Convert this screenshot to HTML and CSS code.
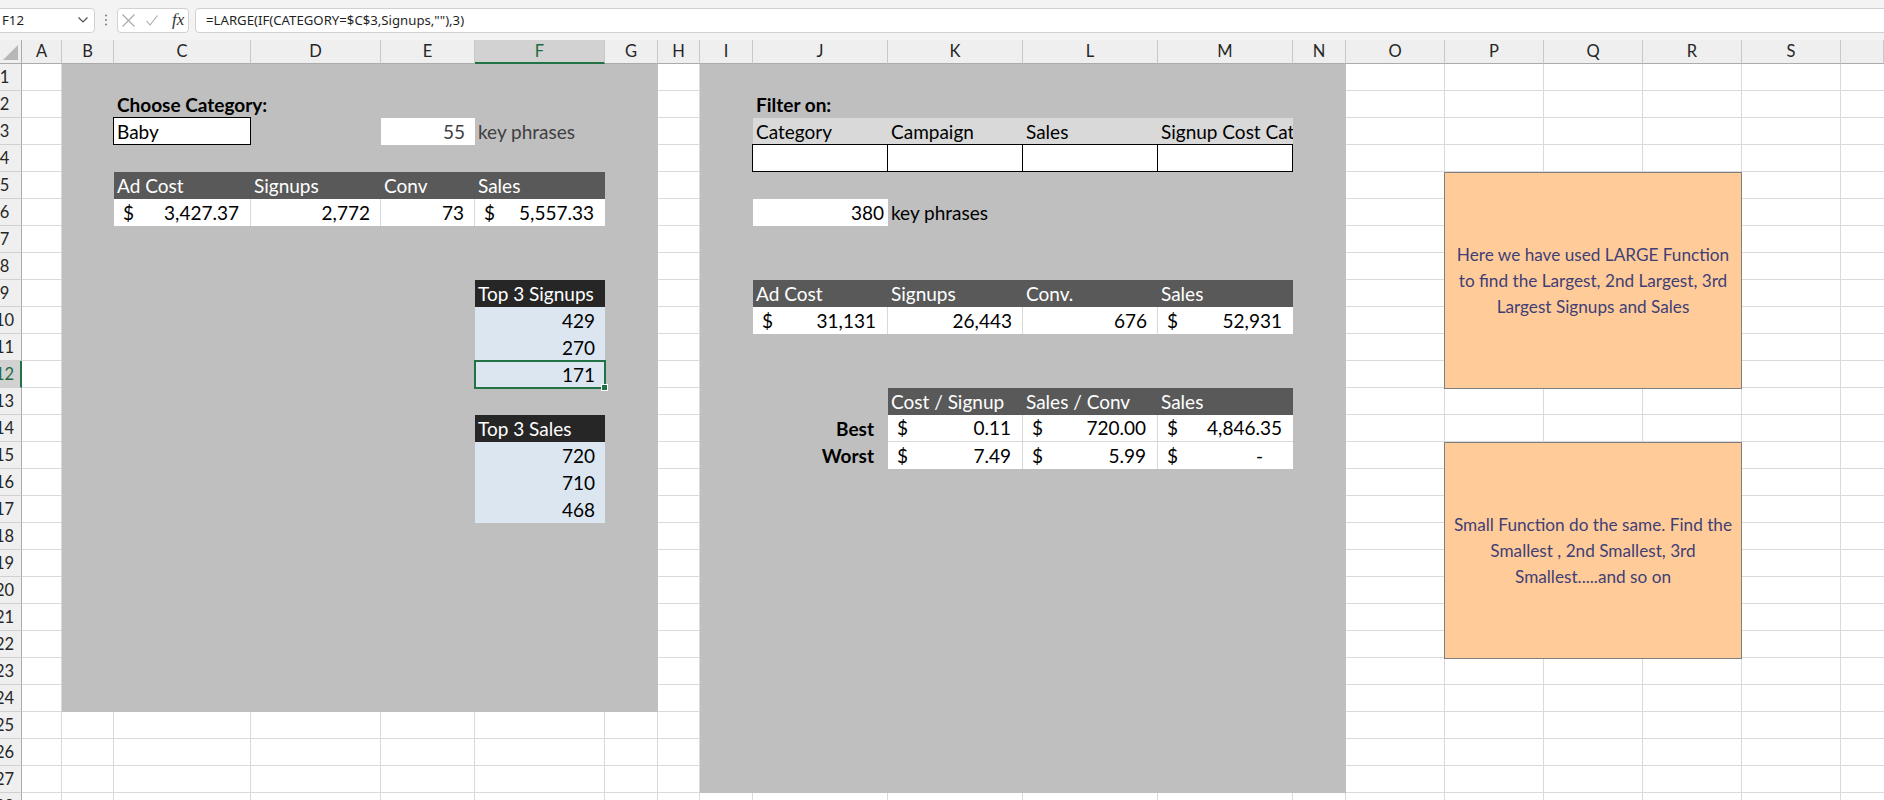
FILE: index.html
```html
<!DOCTYPE html>
<html>
<head>
<meta charset="utf-8">
<title>Excel – LARGE function</title>
<link rel="stylesheet" href="styles.css">
</head>
<body>
<div class="app">
  <div class="fbar">
    <div class="namebox">
      <span>F12</span>
      <svg class="chev" width="10" height="6" viewBox="0 0 10 6"><polyline points="0.5,0.5 5,5 9.5,0.5" fill="none" stroke="#505050" stroke-width="1.2"/></svg>
    </div>
    <svg class="vdots" width="4" height="12" viewBox="0 0 4 12"><circle cx="2" cy="1.5" r="1.1" fill="#8a8a8a"/><circle cx="2" cy="6" r="1.1" fill="#8a8a8a"/><circle cx="2" cy="10.5" r="1.1" fill="#8a8a8a"/></svg>
    <div class="fbtns">
      <svg class="ico-x" width="13" height="13" viewBox="0 0 13 13"><path d="M0.5 0.5 L12.5 12.5 M12.5 0.5 L0.5 12.5" stroke="#a8a8a8" stroke-width="1.1" fill="none"/></svg>
      <svg class="ico-ok" width="12" height="11" viewBox="0 0 12 11"><polyline points="0.5,6 4,10 11.5,0.5" fill="none" stroke="#a8a8a8" stroke-width="1.1"/></svg>
      <span class="fx">fx</span>
    </div>
    <div class="finput">=LARGE(IF(CATEGORY=$C$3,Signups,""),3)</div>
  </div>

  <div class="sheet">
    <div class="corner"><svg width="21" height="23" viewBox="0 0 21 23"><polygon points="18,5 18,20 3,20" fill="#b7b7b7"/></svg></div>
    <div class="ch cA">A</div>
    <div class="ch cB">B</div>
    <div class="ch cC">C</div>
    <div class="ch cD">D</div>
    <div class="ch cE">E</div>
    <div class="ch cF on">F</div>
    <div class="ch cG">G</div>
    <div class="ch cH">H</div>
    <div class="ch cI">I</div>
    <div class="ch cJ">J</div>
    <div class="ch cK">K</div>
    <div class="ch cL">L</div>
    <div class="ch cM">M</div>
    <div class="ch cN">N</div>
    <div class="ch cO">O</div>
    <div class="ch cP">P</div>
    <div class="ch cQ">Q</div>
    <div class="ch cR">R</div>
    <div class="ch cS">S</div>
    <div class="ch cT"></div>

    <div class="rh r1"><span>1</span></div>
    <div class="rh r2"><span>2</span></div>
    <div class="rh r3"><span>3</span></div>
    <div class="rh r4"><span>4</span></div>
    <div class="rh r5"><span>5</span></div>
    <div class="rh r6"><span>6</span></div>
    <div class="rh r7"><span>7</span></div>
    <div class="rh r8"><span>8</span></div>
    <div class="rh r9"><span>9</span></div>
    <div class="rh r10"><span>10</span></div>
    <div class="rh r11"><span>11</span></div>
    <div class="rh r12 on"><span>12</span></div>
    <div class="rh r13"><span>13</span></div>
    <div class="rh r14"><span>14</span></div>
    <div class="rh r15"><span>15</span></div>
    <div class="rh r16"><span>16</span></div>
    <div class="rh r17"><span>17</span></div>
    <div class="rh r18"><span>18</span></div>
    <div class="rh r19"><span>19</span></div>
    <div class="rh r20"><span>20</span></div>
    <div class="rh r21"><span>21</span></div>
    <div class="rh r22"><span>22</span></div>
    <div class="rh r23"><span>23</span></div>
    <div class="rh r24"><span>24</span></div>
    <div class="rh r25"><span>25</span></div>
    <div class="rh r26"><span>26</span></div>
    <div class="rh r27"><span>27</span></div>
    <div class="rh r28"><span>28</span></div>

    <div class="gl cA"></div>
    <div class="gl cB"></div>
    <div class="gl cC"></div>
    <div class="gl cD"></div>
    <div class="gl cE"></div>
    <div class="gl cF"></div>
    <div class="gl cG"></div>
    <div class="gl cH"></div>
    <div class="gl cI"></div>
    <div class="gl cJ"></div>
    <div class="gl cK"></div>
    <div class="gl cL"></div>
    <div class="gl cM"></div>
    <div class="gl cN"></div>
    <div class="gl cO"></div>
    <div class="gl cP"></div>
    <div class="gl cQ"></div>
    <div class="gl cR"></div>
    <div class="gl cS"></div>

    <div class="blk blk-l"></div>
    <div class="blk blk-r"></div>

    <!-- left block -->
    <div class="cell cC r2 b">Choose Category:</div>
    <div class="cell cC r3 inbox">Baby</div>
    <div class="cell cE r3 wt num dim">55</div>
    <div class="cell cF r3 dim">key phrases</div>

    <div class="cell cC r5 hd">Ad Cost</div>
    <div class="cell cD r5 hd">Signups</div>
    <div class="cell cE r5 hd">Conv</div>
    <div class="cell cF r5 hd">Sales</div>
    <div class="cell cC r6 wt sep acct"><span>$</span><span>3,427.37</span></div>
    <div class="cell cD r6 wt sep num">2,772</div>
    <div class="cell cE r6 wt sep num">73</div>
    <div class="cell cF r6 wt acct"><span>$</span><span>5,557.33</span></div>

    <div class="cell cF r9 hd2">Top 3 Signups</div>
    <div class="cell cF r10 blue num">429</div>
    <div class="cell cF r11 blue num">270</div>
    <div class="cell cF r12 blue num">171</div>
    <div class="cell cF r14 hd2">Top 3 Sales</div>
    <div class="cell cF r15 blue num">720</div>
    <div class="cell cF r16 blue num">710</div>
    <div class="cell cF r17 blue num">468</div>

    <!-- right block -->
    <div class="cell cJ r2 b">Filter on:</div>
    <div class="cell cJ r3 flt">Category</div>
    <div class="cell cK r3 flt">Campaign</div>
    <div class="cell cL r3 flt">Sales</div>
    <div class="cell cM r3 flt clip">Signup Cost Category</div>
    <div class="cell cJ r4 ibx first"></div>
    <div class="cell cK r4 ibx"></div>
    <div class="cell cL r4 ibx"></div>
    <div class="cell cM r4 ibx"></div>

    <div class="cell cJ r6 wt num tight">380</div>
    <div class="cell cK r6">key phrases</div>

    <div class="cell cJ r9 hd">Ad Cost</div>
    <div class="cell cK r9 hd">Signups</div>
    <div class="cell cL r9 hd">Conv.</div>
    <div class="cell cM r9 hd">Sales</div>
    <div class="cell cJ r10 wt sep acct"><span>$</span><span>31,131</span></div>
    <div class="cell cK r10 wt sep num">26,443</div>
    <div class="cell cL r10 wt sep num">676</div>
    <div class="cell cM r10 wt acct"><span>$</span><span>52,931</span></div>

    <div class="cell cK r13 hd">Cost / Signup</div>
    <div class="cell cL r13 hd">Sales / Conv</div>
    <div class="cell cM r13 hd">Sales</div>
    <div class="cell cJ r14 lbl">Best</div>
    <div class="cell cK r14 wt sep hsep acct"><span>$</span><span>0.11</span></div>
    <div class="cell cL r14 wt sep hsep acct"><span>$</span><span>720.00</span></div>
    <div class="cell cM r14 wt hsep acct"><span>$</span><span>4,846.35</span></div>
    <div class="cell cJ r15 lbl">Worst</div>
    <div class="cell cK r15 wt sep acct"><span>$</span><span>7.49</span></div>
    <div class="cell cL r15 wt sep acct"><span>$</span><span>5.99</span></div>
    <div class="cell cM r15 wt acct"><span>$</span><span class="zero">-</span></div>

    <!-- active cell F12 -->
    <div class="sel"><i class="handle"></i></div>

    <!-- text box shapes -->
    <div class="note note-1">Here we have used LARGE Function<br>to find the Largest, 2nd Largest, 3rd<br>Largest Signups and Sales</div>
    <div class="note note-2">Small Function do the same. Find the<br>Smallest , 2nd Smallest, 3rd<br>Smallest.....and so on</div>
  </div>
</div>
</body>
</html>
```

FILE: styles.css
```css
* { box-sizing: border-box; }
html, body { margin: 0; padding: 0; }
body {
  width: 1884px;
  height: 800px;
  overflow: hidden;
  background: #ffffff;
  font-family: Lato, "Liberation Sans", sans-serif;
  color: #000;
}

/* ---------- formula bar ---------- */
.fbar {
  height: 40px;
  background: #f3f3f3;
  display: flex;
  align-items: center;
  font-family: "Noto Sans", "Liberation Sans", sans-serif;
  font-size: 13.2px;
  color: #1f1f1f;
  overflow: hidden;
}
.namebox {
  margin-left: -6px;
  width: 101px;
  height: 25px;
  flex-shrink: 0;
  background: #fff;
  border: 1px solid #d1d1d1;
  border-radius: 4px;
  display: flex;
  align-items: center;
  justify-content: space-between;
  padding: 0 6px 0 7px;
}
.vdots { margin-left: 9px; flex-shrink: 0; }
.fbtns {
  margin-left: 9px;
  width: 72px;
  height: 25px;
  flex-shrink: 0;
  background: #fff;
  border: 1px solid #d1d1d1;
  border-radius: 4px;
  display: flex;
  align-items: center;
  padding-left: 4px;
}
.ico-ok { margin-left: 11px; }
.fx {
  margin-left: 14px;
  font-family: "Liberation Serif", "DejaVu Serif", serif;
  font-style: italic;
  font-size: 17px;
  color: #333;
  line-height: 20px;
}
.finput {
  margin-left: 6px;
  margin-right: -12px;
  flex: 1;
  height: 25px;
  background: #fff;
  border: 1px solid #d1d1d1;
  border-radius: 4px;
  padding-left: 10px;
  display: flex;
  align-items: center;
  white-space: nowrap;
}

/* ---------- sheet grid ---------- */
.sheet {
  display: grid;
  grid-template-columns: 22px 40px 52px 137px 130px 94px 130px 53px 42px 53px 135px 135px 135px 135px 53px 99px 99px 99px 99px 99px 1fr;
  grid-template-rows: 24px repeat(28, 27px);
  height: 760px;
  overflow: hidden;
  background-color: #fff;
  background-image: linear-gradient(to bottom, transparent 26px, #dadada 26px);
  background-size: 100% 27px;
  background-position: 0 24px;
  background-repeat: repeat-y;
}

.cA { grid-column: 2; }  .cB { grid-column: 3; }  .cC { grid-column: 4; }
.cD { grid-column: 5; }  .cE { grid-column: 6; }  .cF { grid-column: 7; }
.cG { grid-column: 8; }  .cH { grid-column: 9; }  .cI { grid-column: 10; }
.cJ { grid-column: 11; } .cK { grid-column: 12; } .cL { grid-column: 13; }
.cM { grid-column: 14; } .cN { grid-column: 15; } .cO { grid-column: 16; }
.cP { grid-column: 17; } .cQ { grid-column: 18; } .cR { grid-column: 19; }
.cS { grid-column: 20; } .cT { grid-column: 21; }

.r1 { grid-row: 2; }   .r2 { grid-row: 3; }   .r3 { grid-row: 4; }   .r4 { grid-row: 5; }
.r5 { grid-row: 6; }   .r6 { grid-row: 7; }   .r7 { grid-row: 8; }   .r8 { grid-row: 9; }
.r9 { grid-row: 10; }  .r10 { grid-row: 11; } .r11 { grid-row: 12; } .r12 { grid-row: 13; }
.r13 { grid-row: 14; } .r14 { grid-row: 15; } .r15 { grid-row: 16; } .r16 { grid-row: 17; }
.r17 { grid-row: 18; } .r18 { grid-row: 19; } .r19 { grid-row: 20; } .r20 { grid-row: 21; }
.r21 { grid-row: 22; } .r22 { grid-row: 23; } .r23 { grid-row: 24; } .r24 { grid-row: 25; }
.r25 { grid-row: 26; } .r26 { grid-row: 27; } .r27 { grid-row: 28; } .r28 { grid-row: 29; }

/* headers */
.corner {
  grid-row: 1;
  grid-column: 1;
  background: #efefef;
  border-right: 1px solid #ababab;
  border-bottom: 1px solid #ababab;
}
.corner svg { display: block; }
.ch {
  grid-row: 1;
  background: #efefef;
  border-right: 1px solid #c8c8c8;
  border-bottom: 1px solid #ababab;
  text-align: center;
  font-size: 16.5px;
  line-height: 23px;
  color: #262626;
}
.ch.on {
  background: #d2d2d2;
  color: #1e6b41;
  border-bottom: 2px solid #217346;
  line-height: 22px;
}
.rh {
  grid-column: 1;
  background: #efefef;
  border-right: 1px solid #ababab;
  border-bottom: 1px solid #d0d0d0;
  overflow: hidden;
  display: flex;
  align-items: flex-end;
  padding-bottom: 2px;
  font-size: 16.5px;
  line-height: 22px;
  color: #262626;
}
.rh span {
  flex-shrink: 0;
  width: 35px;
  margin-left: -13px;
  text-align: center;
}
.rh.on {
  background: #d2d2d2;
  color: #1e6b41;
  border-right: 2px solid #217346;
}

/* column gridlines */
.gl {
  grid-row: 2 / -1;
  border-right: 1px solid #dadada;
}

/* gray panels */
.blk { background: #bfbfbf; }
.blk-l { grid-column: 3 / 9; grid-row: 2 / 26; }
.blk-r { grid-column: 10 / 16; grid-row: 2 / 29; }

/* cells */
.cell {
  display: flex;
  align-items: flex-end;
  padding: 0 3px 2px 3px;
  font-size: 19px;
  line-height: 22px;
  white-space: nowrap;
  min-width: 0;
}
.b { font-weight: 700; }
.wt { background: #fff; }
.dim { color: #404040; }
.sep { border-right: 1px solid #d9d9d9; }
.hsep { border-bottom: 1px solid #d9d9d9; }
.num { justify-content: flex-end; padding-right: 10px; }
.num.tight { padding-right: 4px; }
.acct { justify-content: space-between; padding-left: 9px; padding-right: 11px; }
.zero { padding-right: 19px; }
.hd { background: #595959; color: #fff; }
.hd2 { background: #262626; color: #fff; }
.blue { background: #dce6f1; }
.flt { background: #d9d9d9; }
.clip { overflow: hidden; }
.lbl { justify-content: flex-end; padding-right: 14px; font-weight: 700; }

.inbox {
  background: #fff;
  margin: -1px 0 0 -1px;
  border: 1px solid #000;
  padding-bottom: 1px;
  padding-left: 3px;
}
.ibx {
  background: #fff;
  margin-top: -1px;
  border-top: 1px solid #000;
  border-bottom: 1px solid #000;
  border-right: 1px solid #000;
}
.ibx.first {
  margin-left: -1px;
  border-left: 1px solid #000;
}

/* active cell */
.sel {
  grid-column: 7;
  grid-row: 13;
  margin: -1px;
  border: 2px solid #217346;
  position: relative;
}
.handle {
  position: absolute;
  right: -4px;
  bottom: -4px;
  width: 7px;
  height: 7px;
  background: #217346;
  border: 1px solid #fff;
}

/* text-box shapes */
.note {
  grid-column: 17 / 20;
  margin: 0 0 -1px -1px;
  background: #ffcc99;
  border: 1px solid #7f7f7f;
  color: #3f3f76;
  font-size: 17.2px;
  line-height: 26px;
  text-align: center;
  display: flex;
  align-items: center;
  justify-content: center;
  white-space: nowrap;
}
.note-1 { grid-row: 6 / 14; }
.note-2 { grid-row: 16 / 24; }
```
